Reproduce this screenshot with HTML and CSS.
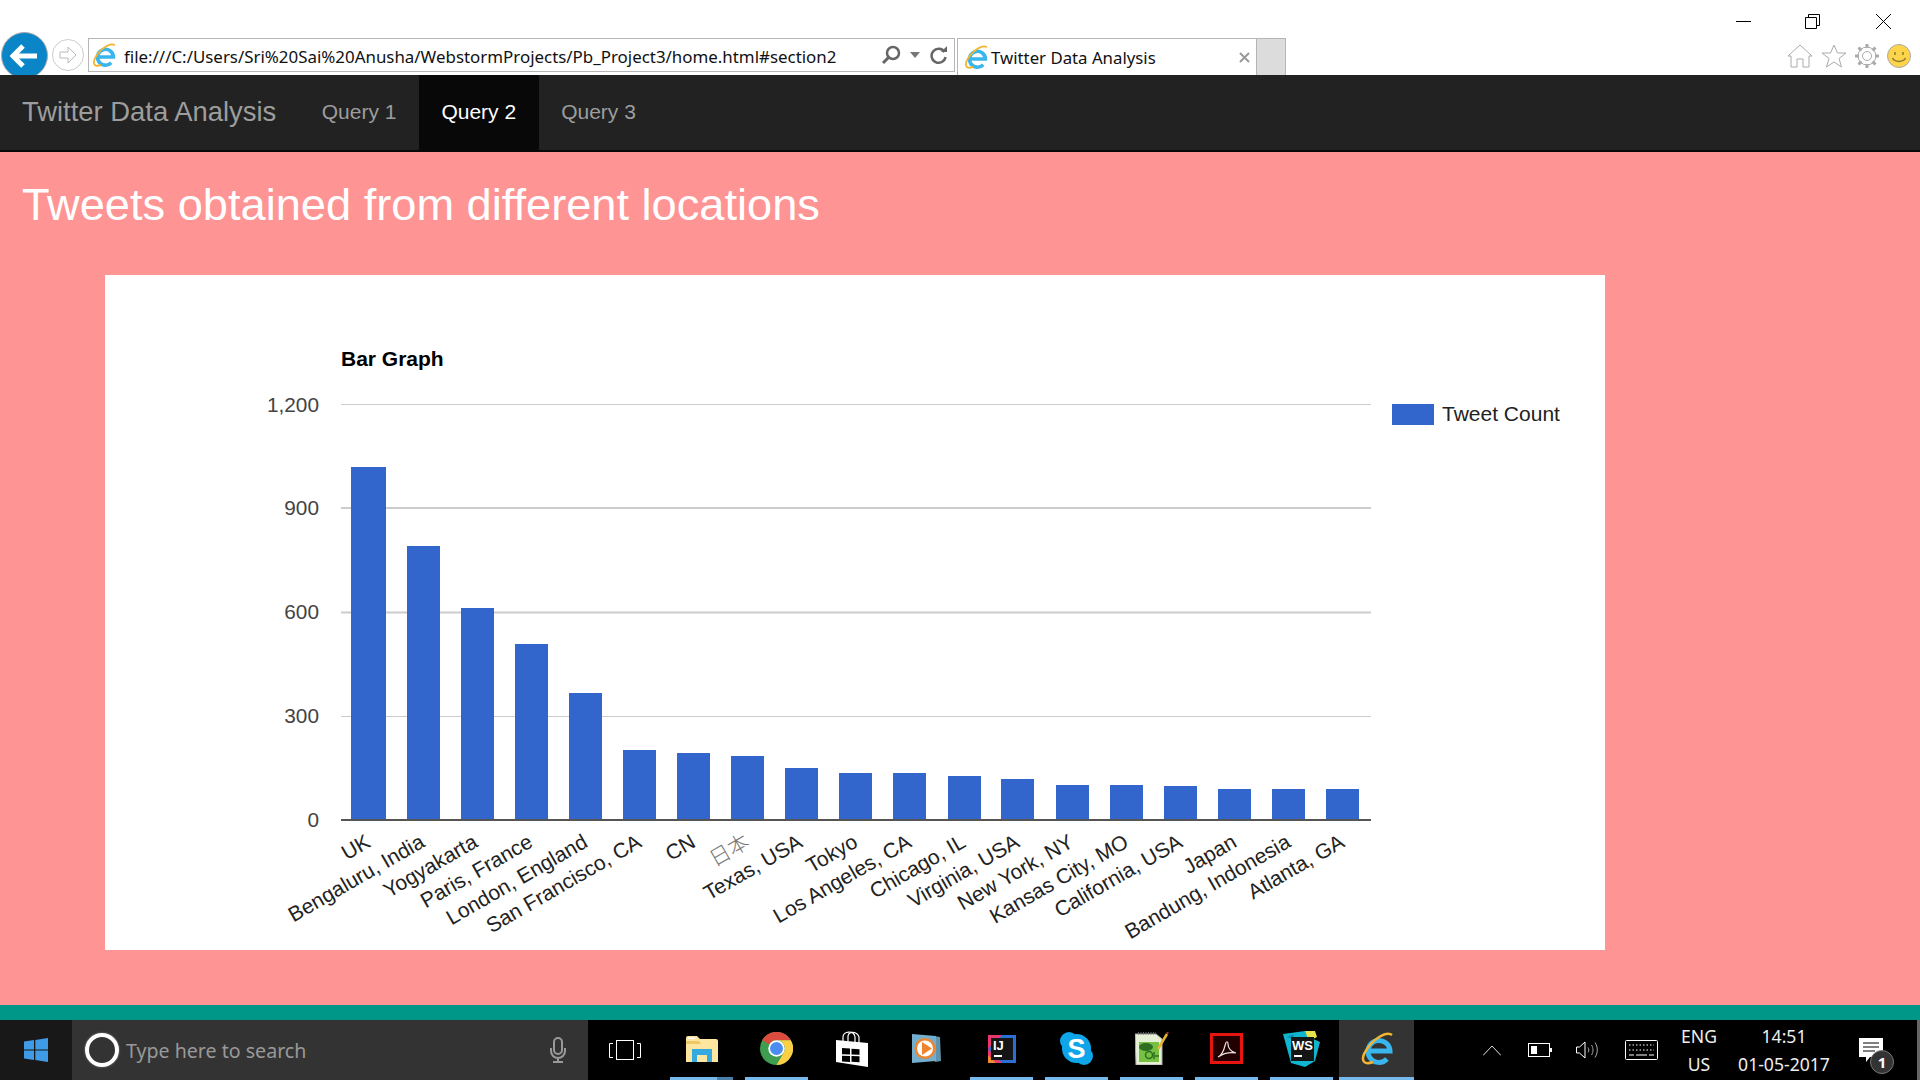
FILE: index.html
```html
<!DOCTYPE html>
<html lang="en">
<head>
    <meta charset="UTF-8">
    <meta name="viewport" content="width=device-width, initial-scale=1.0">
    <title>Twitter Data Analysis</title>
    <link rel="stylesheet" href="styles.css">
</head>
<body>

    <svg class="defs" width="0" height="0">
        <symbol id="ie" viewBox="0 0 36 34">
            <path d="M9 19h22a11 11 0 1 0-3 8" fill="none" stroke="#39b6ee" stroke-width="5"/>
            <path d="M33 3C28-1 13 6 5 22c-3 8 1 11 9 8" fill="none" stroke="#f3b52f" stroke-width="2.500"/>
        </symbol>
    </svg>

    <!-- browser window top -->
    <header class="browser">
        <div class="window-row">
            <svg class="win-btn" width="15" height="15" viewBox="0 0 15 15"><path d="M0 7.500h15" stroke="#000"/></svg>
            <svg class="win-btn" width="15" height="15" viewBox="0 0 15 15"><path d="M3.500 3.500V.5h11v11h-3M.5 3.500h11v11H.5z" fill="#fff" stroke="#000"/></svg>
            <svg class="win-btn" width="15" height="15" viewBox="0 0 15 15"><path d="M0 0l15 15M15 0L0 15" stroke="#000"/></svg>
        </div>
        <div class="toolbar">
            <div class="back-btn">
                <svg width="30" height="26" viewBox="0 0 30 26"><path d="M13 3L3 13l10 10M3 13h24" fill="none" stroke="#fff" stroke-width="5"/></svg>
            </div>
            <div class="forward-btn">
                <svg width="20" height="18" viewBox="0 0 20 18"><path d="M10 1l8 8-8 8v-5H2V6h8z" fill="none" stroke="#bbb"/></svg>
            </div>
            <div class="address-bar">
                <svg class="page-icon" width="26" height="25"><use href="#ie"/></svg>
                <span class="url">file:///C:/Users/Sri%20Sai%20Anusha/WebstormProjects/Pb_Project3/home.html#section2</span>
                <svg class="addr-icon addr-search" width="20" height="20" viewBox="0 0 20 20"><circle cx="12" cy="8" r="6" fill="none" stroke="#666" stroke-width="2.500"/><path d="M8 12l-6 6" stroke="#666" stroke-width="3"/></svg>
                <svg class="addr-icon addr-drop" width="10" height="6" viewBox="0 0 10 6"><path d="M0 0h10L5 6z" fill="#777"/></svg>
                <svg class="addr-icon addr-refresh" width="18" height="20" viewBox="0 0 18 20"><path d="M14.500 7a7 7 0 1 0 1 5" fill="none" stroke="#666" stroke-width="2.500"/><path d="M11 7h6V1z" fill="#666"/></svg>
            </div>
            <div class="tab">
                <svg width="26" height="25"><use href="#ie"/></svg>
                <span class="tab-title">Twitter Data Analysis</span>
                <svg class="tab-close" width="11" height="11" viewBox="0 0 11 11"><path d="M1 1l9 9M10 1l-9 9" stroke="#999" stroke-width="2"/></svg>
            </div>
            <div class="new-tab"></div>
            <div class="tools">
                <svg width="26" height="24" viewBox="0 0 26 24"><path d="M1 12L13 1l12 11h-3v11h-6v-8h-6v8H4V12z" fill="#fff" stroke="#aaa"/></svg>
                <svg width="26" height="24" viewBox="0 0 26 24"><path d="M13 1l3.500 8H25l-7 5.500 2.500 8.500-7.500-5-7.500 5L8 14.500 1 9h8.500z" fill="#fff" stroke="#aaa"/></svg>
                <svg width="24" height="24" viewBox="0 0 24 24"><circle cx="12" cy="12" r="4.500" fill="none" stroke="#aaa"/><circle cx="12" cy="12" r="9" fill="none" stroke="#aaa" stroke-width="1"/><path d="M12 0v4M12 20v4M0 12h4M20 12h4M3.500 3.500l3 3M17.500 17.500l3 3M20.500 3.500l-3 3M6.500 17.500l-3 3" stroke="#aaa" stroke-width="3"/></svg>
                <svg width="24" height="24" viewBox="0 0 24 24"><circle cx="12" cy="12" r="11.500" fill="#fdd44a" stroke="#aaa"/><path d="M5.500 14c2 4.500 11 4.500 13 0" fill="none" stroke="#8a7a30" stroke-width="1.500"/><path d="M8 8v3M16 8v3" stroke="#8a7a30" stroke-width="1.500"/></svg>
            </div>
        </div>
    </header>

    <nav class="navbar">
        <a class="brand">Twitter Data Analysis</a>
        <a class="nav-link">Query 1</a>
        <a class="nav-link active">Query 2</a>
        <a class="nav-link">Query 3</a>
    </nav>

    <main class="content">
        <h1>Tweets obtained from different locations</h1>
        <div class="chart-card">
            <svg class="chart" width="1500" height="675" viewBox="105 275 1500 675">
                <text class="chart-title" x="341" y="366">Bar Graph</text>

                <g class="grid">
                    <path d="M341 404.500h1030M341 716.500h1030"/>
                    <path class="grid-thick" d="M341 508h1030M341 612.500h1030"/>
                </g>
                <g class="y-labels">
                    <text x="319" y="412">1,200</text>
                    <text x="319" y="515">900</text>
                    <text x="319" y="619">600</text>
                    <text x="319" y="723">300</text>
                    <text x="319" y="827">0</text>
                </g>

                <g class="bars">
                    <rect x="351" y="467" width="35" height="353"/>
                    <rect x="407" y="546" width="33" height="274"/>
                    <rect x="461" y="608" width="33" height="212"/>
                    <rect x="515" y="644" width="33" height="176"/>
                    <rect x="569" y="693" width="33" height="127"/>
                    <rect x="623" y="750" width="33" height="70"/>
                    <rect x="677" y="753" width="33" height="67"/>
                    <rect x="731" y="756" width="33" height="64"/>
                    <rect x="785" y="768" width="33" height="52"/>
                    <rect x="839" y="773" width="33" height="47"/>
                    <rect x="893" y="773" width="33" height="47"/>
                    <rect x="948" y="776" width="33" height="44"/>
                    <rect x="1001" y="779" width="33" height="41"/>
                    <rect x="1056" y="785" width="33" height="35"/>
                    <rect x="1110" y="785" width="33" height="35"/>
                    <rect x="1164" y="786" width="33" height="34"/>
                    <rect x="1218" y="789" width="33" height="31"/>
                    <rect x="1272" y="789" width="33" height="31"/>
                    <rect x="1326" y="789" width="33" height="31"/>
                </g>
                <path class="axis" d="M341 820h1030"/>

                <g class="x-labels">
                    <text transform="translate(372 846) rotate(-30)">UK</text>
                    <text transform="translate(426 846) rotate(-30)">Bengaluru, India</text>
                    <text transform="translate(479 846) rotate(-30)">Yogyakarta</text>
                    <text transform="translate(534 846) rotate(-30)">Paris, France</text>
                    <text transform="translate(589 846) rotate(-30)">London, England</text>
                    <text transform="translate(643 846) rotate(-30)">San Francisco, CA</text>
                    <text transform="translate(697 846) rotate(-30)">CN</text>
                    <text class="cjk" transform="translate(751 846) rotate(-30)">日本</text>
                    <text transform="translate(804 846) rotate(-30)">Texas, USA</text>
                    <text transform="translate(859 846) rotate(-30)">Tokyo</text>
                    <text transform="translate(913 846) rotate(-30)">Los Angeles, CA</text>
                    <text transform="translate(967 846) rotate(-30)">Chicago, IL</text>
                    <text transform="translate(1021 846) rotate(-30)">Virginia, USA</text>
                    <text transform="translate(1075 846) rotate(-30)">New York, NY</text>
                    <text transform="translate(1130 846) rotate(-30)">Kansas City, MO</text>
                    <text transform="translate(1184 846) rotate(-30)">California, USA</text>
                    <text transform="translate(1238 846) rotate(-30)">Japan</text>
                    <text transform="translate(1292 846) rotate(-30)">Bandung, Indonesia</text>
                    <text transform="translate(1346 846) rotate(-30)">Atlanta, GA</text>
                </g>

                <rect class="legend-key" x="1392" y="404" width="42" height="21"/>
                <text class="legend-text" x="1442" y="421">Tweet Count</text>
            </svg>
        </div>
    </main>

    <div class="teal-strip"></div>

    <!-- windows taskbar -->
    <footer class="taskbar">
        <div class="start">
            <svg width="24" height="24" viewBox="0 0 24 24"><path d="M0 3.500l10-1.400v9.300H0zM11.300 1.900L24 0v11.400H11.300zM0 12.600h10v9.300L0 20.500zM11.300 12.600H24V24l-12.700-1.900z" fill="#3f9be6"/></svg>
        </div>
        <div class="search">
            <div class="cortana"></div>
            <span class="search-text">Type here to search</span>
            <svg class="mic" width="16" height="26" viewBox="0 0 16 26"><rect x="4" y="1" width="8" height="16" rx="4" fill="none" stroke="#999" stroke-width="2"/><path d="M1 11v3a7 7 0 0 0 14 0v-3M8 21v4M3 25h10" fill="none" stroke="#999" stroke-width="2"/></svg>
        </div>
        <div class="task-view">
            <svg width="32" height="20" viewBox="0 0 32 20"><path d="M4 3.500H.5v14H4M28 3.500h3.500v14H28" fill="none" stroke="#fff"/><rect x="7.500" y=".5" width="17" height="19" fill="none" stroke="#fff"/></svg>
        </div>
        <div class="apps">
            <div class="app running grouped">
                <svg width="32" height="26" viewBox="0 0 32 26"><path d="M0 2a2 2 0 0 1 2-2h9l3 3h16a2 2 0 0 1 2 2v21H0z" fill="#fde6a0"/><path d="M2 1.500h7v1.500H2z" fill="#fff"/><path d="M0 5h13l2 3H0z" fill="#efc765"/><path d="M6 13h20v13h-5v-7H11v7H6z" fill="#36a9e1"/></svg>
            </div>
            <div class="app running">
                <svg width="33" height="33" viewBox="0 0 32 32"><circle cx="16" cy="16" r="16" fill="#3f9d4f"/><path d="M2.100 8A16 16 0 0 1 29.900 8H16a8 8 0 0 0-7 4z" fill="#db4c3f"/><path d="M29.900 8A16 16 0 0 1 16 32l7-12a8 8 0 0 0-7-12z" fill="#fbcf45"/><circle cx="16" cy="16" r="8" fill="#fff"/><circle cx="16" cy="16" r="6.300" fill="#4a8cf0"/></svg>
            </div>
            <div class="app">
                <svg width="32" height="36" viewBox="0 0 32 36"><path d="M7 10V6c0-6 11-7 12 0v5M12 10V5c1-5 9-5 11 1v6" fill="none" stroke="#fff" stroke-width="1.200"/><path d="M0 9l32 3v24L0 31z" fill="#fff"/><path d="M6 17l8 .6v6l-8-.3zM15.500 17.700l8 .6v5.500l-8-.3zM6 24.700l8 .3v6l-8-.6zM15.500 25l8 .3v6l-8-.6z" fill="#000"/></svg>
            </div>
            <div class="app">
                <svg width="29" height="29" viewBox="0 0 29 29"><path d="M22 2l6 1 1 24-6 1z" fill="#5e92ad"/><path d="M0 0l24 2v25L0 29z" fill="#74aecd"/><circle cx="13" cy="14.500" r="10.500" fill="#f0842c"/><circle cx="13" cy="14.500" r="8" fill="#fff"/><path d="M10 8l10 6.500L10 21z" fill="#f0842c"/></svg>
            </div>
            <div class="app running">
                <svg width="28" height="28" viewBox="0 0 28 28"><rect width="28" height="28" fill="#2b6fd6"/><path d="M0 0h14L0 14zM0 28V14l14 14z" fill="#e8366f"/><path d="M0 28v-8l8 8z" fill="#f08a2c"/><rect x="3" y="3" width="22" height="22" fill="#151515"/><text class="logo-text" x="5" y="15">IJ</text><path d="M6 20h8v2H6z" fill="#fff"/></svg>
            </div>
            <div class="app running">
                <svg width="33" height="33" viewBox="0 0 33 33"><circle cx="9" cy="9" r="9" fill="#0ea5e9"/><circle cx="24" cy="24" r="9" fill="#0ea5e9"/><circle cx="16.500" cy="16.500" r="14.500" fill="#0ea5e9"/><text class="skype-text" x="16.500" y="26">S</text></svg>
            </div>
            <div class="app running">
                <svg width="34" height="33" viewBox="0 0 34 33"><path d="M0 2h21l6 5v26H1z" fill="#e4efd6" stroke="#aaa"/><path d="M3 1h18" stroke="#666" stroke-dasharray="1 1.500" stroke-width="3"/><path d="M4 10h20v20H4z" fill="#77c142"/><ellipse cx="11" cy="15" rx="7" ry="4" fill="#2f6f22"/><circle cx="14" cy="23" r="3.500" fill="none" stroke="#2f6f22" stroke-width="1.500"/><path d="M19 20v7M20 24h4" stroke="#2f6f22" stroke-width="1.500"/><path d="M23 17L32 2" stroke="#e6b32e" stroke-width="2.500"/><path d="M32 2l1-2" stroke="#a33" stroke-width="2"/></svg>
            </div>
            <div class="app running">
                <svg width="33" height="31" viewBox="0 0 33 31"><rect x="1.500" y="1.500" width="30" height="28" fill="#200" stroke="#e8140f" stroke-width="3"/><path d="M8 24c3-1 6-7 7.500-13 .5-3 2.500-3 2.500 0 0 4 3 8 8 9-6-1-12 0-18 4z" fill="none" stroke="#e8e0e0" stroke-width="1.200"/></svg>
            </div>
            <div class="app running">
                <svg width="37" height="36" viewBox="0 0 37 36"><path d="M0 3l22-3 4 6 11 5-5 19-10 6-14-4z" fill="#10b6cf"/><path d="M22 0h10l2 6-8 4z" fill="#e9e24a"/><path d="M4 6l6-3 2 6z" fill="#0a8fb8"/><rect x="8" y="6" width="23" height="24" fill="#151515"/><text class="logo-text" x="9" y="19">WS</text><path d="M11 24h8v2h-8z" fill="#fff"/></svg>
            </div>
            <div class="app current">
                <svg width="36" height="34"><use href="#ie"/></svg>
            </div>
        </div>
        <div class="tray">
            <svg width="18" height="11" viewBox="0 0 18 11"><path d="M0 10.500L9 1l9 9.500" fill="none" stroke="#ddd"/></svg>
            <svg class="tray-battery" width="24" height="14" viewBox="0 0 24 14"><rect x=".5" y=".5" width="21" height="13" fill="none" stroke="#fff"/><rect x="3" y="3" width="6" height="8" fill="#fff"/><path d="M22 5h2v4h-2z" fill="#fff"/></svg>
            <svg class="tray-sound" width="24" height="18" viewBox="0 0 24 18"><path d="M.5 6h3L9 1v16l-5.500-5h-3z" fill="none" stroke="#fff"/><path d="M12 6.500c1 1.500 1 3.500 0 5M15.500 4c2 3 2 7 0 10M19 1.500c3 4 3 11 0 15" fill="none" stroke="#aaa"/></svg>
            <svg class="tray-keys" width="33" height="20" viewBox="0 0 33 20"><rect x=".5" y=".5" width="32" height="19" rx="1" fill="none" stroke="#fff"/><path d="M4 5h25M4 10h25" stroke="#fff" stroke-dasharray="1.500 2"/><path d="M4 15h5M11 15h11M24 15h5" stroke="#fff"/></svg>
            <div class="lang"><span>ENG</span><span>US</span></div>
            <div class="clock"><span>14:51</span><span>01-05-2017</span></div>
            <div class="notify">
                <svg width="24" height="24" viewBox="0 0 24 24"><path d="M0 0h24v19H11l-4 5v-5H0z" fill="#fff"/><path d="M4 5h16M4 9h16M4 13h12" stroke="#000"/></svg>
                <span class="notify-badge">1</span>
            </div>
        </div>
    </footer>

</body>
</html>
```

FILE: styles.css
```css
html, body {
    margin: 0;
    height: 1080px;
    overflow: hidden;
}
body {
    font-family: "Liberation Sans", Arial, sans-serif;
    display: flex;
    flex-direction: column;
    background-color: #ff9494;
}
.defs {
    display: none;
}

/* browser top */
.browser {
    height: 75px;
    flex: none;
    background-color: #fff;
    overflow: hidden;
}
.window-row {
    height: 32px;
    display: flex;
    justify-content: flex-end;
    align-items: flex-start;
    gap: 54px;
    padding: 14px 29px 0 0;
    box-sizing: border-box;
}
.win-btn:last-child {
    margin-left: 2px;
}
.toolbar {
    height: 43px;
    display: flex;
    align-items: flex-start;
}
.back-btn {
    width: 47px;
    height: 47px;
    margin-left: 1px;
    border-radius: 50%;
    background-color: #0a86c8;
    border: 1px solid #aaa;
    box-sizing: border-box;
    flex: none;
    display: flex;
    align-items: center;
    justify-content: center;
}
.forward-btn {
    width: 32px;
    height: 32px;
    margin: 7px 0 0 4px;
    border-radius: 50%;
    border: 1px solid #ccc;
    box-sizing: border-box;
    flex: none;
    display: flex;
    align-items: center;
    justify-content: center;
}
.address-bar {
    width: 867px;
    height: 34px;
    margin: 6px 0 0 4px;
    border: 1px solid #b5b5b5;
    box-sizing: border-box;
    display: flex;
    align-items: center;
    flex: none;
}
.page-icon {
    margin: 0 7px 0 2px;
    flex: none;
}
.url {
    flex: 1;
    padding-top: 2px;
    font-family: "Noto Sans", sans-serif;
    font-size: 16.9px;
    color: #111;
    white-space: nowrap;
}
.addr-icon {
    flex: none;
}
.addr-search {
    margin-right: 9px;
}
.addr-drop {
    margin-right: 10px;
}
.addr-refresh {
    margin-right: 6px;
}
.tab {
    width: 300px;
    height: 37px;
    margin: 6px 0 0 2px;
    border: 1px solid #b5b5b5;
    border-bottom: none;
    box-sizing: border-box;
    display: flex;
    align-items: center;
    padding: 0 6px 0 5px;
    flex: none;
}
.tab-title {
    flex: 1;
    margin-left: 2px;
    font-family: "Noto Sans", sans-serif;
    font-size: 16.8px;
    color: #111;
}
.new-tab {
    width: 29px;
    height: 37px;
    margin-top: 6px;
    background-color: #dcdcdc;
    border: 1px solid #b5b5b5;
    border-left: none;
    border-bottom: none;
    box-sizing: border-box;
    flex: none;
}
.tools {
    margin: 12px 9px 0 auto;
    display: flex;
    gap: 8px;
}

/* navbar */
.navbar {
    height: 77px;
    flex: none;
    box-sizing: border-box;
    background-color: #222;
    border-bottom: 2px solid #080808;
    display: flex;
}
.brand {
    padding: 0 23px 0 22px;
    font-size: 27.4px;
    line-height: 74px;
    color: #9d9d9d;
}
.nav-link {
    padding: 0 22.5px;
    font-size: 21px;
    line-height: 73px;
    color: #9d9d9d;
}
.nav-link.active {
    color: #fff;
    background-color: #080808;
}

/* page */
.content {
    flex: 1;
    min-height: 0;
}
h1 {
    margin: 0;
    padding: 25px 0 0 22px;
    height: 123px;
    box-sizing: border-box;
    font-size: 45.2px;
    line-height: 56px;
    font-weight: normal;
    color: #fff;
}
.chart-card {
    width: 1500px;
    height: 675px;
    margin-left: 105px;
    background-color: #fff;
}
.chart {
    display: block;
}
.chart text {
    font-family: "Liberation Sans", Arial, sans-serif;
}
.chart-title {
    font-size: 21px;
    font-weight: bold;
    fill: #000;
}
.grid path {
    stroke: #ccc;
    stroke-width: 1;
}
.grid .grid-thick {
    stroke-width: 2;
}
.axis {
    stroke: #555;
    stroke-width: 2;
}
.bars rect, .legend-key {
    fill: #3366cc;
}
.y-labels text {
    font-size: 20.8px;
    fill: #444;
    text-anchor: end;
}
.x-labels text {
    font-size: 21px;
    fill: #222;
    text-anchor: end;
}
.chart .x-labels .cjk {
    font-family: "Noto Sans CJK JP", sans-serif;
    font-weight: 300;
    fill: #777;
}
.legend-text {
    font-size: 21px;
    fill: #222;
}

.teal-strip {
    height: 15px;
    flex: none;
    background-color: #009688;
}

/* taskbar */
.taskbar {
    height: 60px;
    flex: none;
    background-color: #000;
    display: flex;
    color: #fff;
    font-family: "Noto Sans", sans-serif;
}
.start {
    width: 72px;
    flex: none;
    background-color: #181818;
    display: flex;
    align-items: center;
    justify-content: center;
}
.search {
    width: 516px;
    flex: none;
    background-color: #333;
    display: flex;
    align-items: center;
    padding: 0 22px 0 13px;
    box-sizing: border-box;
}
.cortana {
    width: 34px;
    height: 34px;
    border-radius: 50%;
    border: 4px solid #fff;
    box-shadow: 0 0 2px #999;
    box-sizing: border-box;
    flex: none;
}
.search-text {
    flex: 1;
    margin-left: 7px;
    font-size: 19.6px;
    color: #999;
}
.task-view {
    width: 73px;
    flex: none;
    display: flex;
    align-items: center;
    justify-content: center;
}
.apps {
    display: flex;
    flex: none;
    margin-left: 3px;
}
.app {
    width: 75px;
    height: 60px;
    box-sizing: border-box;
    display: flex;
    align-items: center;
    justify-content: center;
    border-bottom: 3px solid transparent;
    background-clip: padding-box;
}
.app.running {
    border-image: linear-gradient(90deg, #000 9.5%, #76b9ed 9.5%, #76b9ed 90.5%, #000 90.5%) 1;
}
.app.running.grouped {
    border-image: linear-gradient(90deg, #000 9.5%, #76b9ed 9.5%, #76b9ed 70%, #4d80a8 70%, #4d80a8 90.5%, #000 90.5%) 1;
}
.app.current {
    background-color: #333;
    background-clip: border-box;
    border-bottom-color: #76b9ed;
}
.tray {
    flex: 1;
    display: flex;
    align-items: center;
    position: relative;
    padding-left: 69px;
    border-right: 3px solid #666;
}
.tray-battery {
    margin-left: 27px;
}
.tray-sound {
    margin-left: 24px;
}
.tray-keys {
    margin-left: 25px;
}
.lang, .clock {
    display: flex;
    flex-direction: column;
    align-items: center;
    font-size: 17.6px;
    line-height: 28px;
    color: #eee;
}
.lang {
    margin-left: 24px;
    width: 34px;
}
.clock {
    margin-left: 22px;
    width: 92px;
}
.notify {
    margin-left: 29px;
    position: relative;
    height: 24px;
}
.notify-badge {
    position: absolute;
    left: 11px;
    top: 12px;
    width: 22px;
    height: 22px;
    border-radius: 50%;
    background-color: #333;
    border: 1px solid #777;
    font-size: 15px;
    font-weight: bold;
    line-height: 22px;
    text-align: center;
}
.logo-text {
    font-family: "Liberation Sans", Arial, sans-serif;
    font-size: 13px;
    font-weight: bold;
    fill: #fff;
}
.skype-text {
    font-family: "Liberation Sans", Arial, sans-serif;
    font-size: 27px;
    font-weight: bold;
    fill: #fff;
    text-anchor: middle;
}
```
